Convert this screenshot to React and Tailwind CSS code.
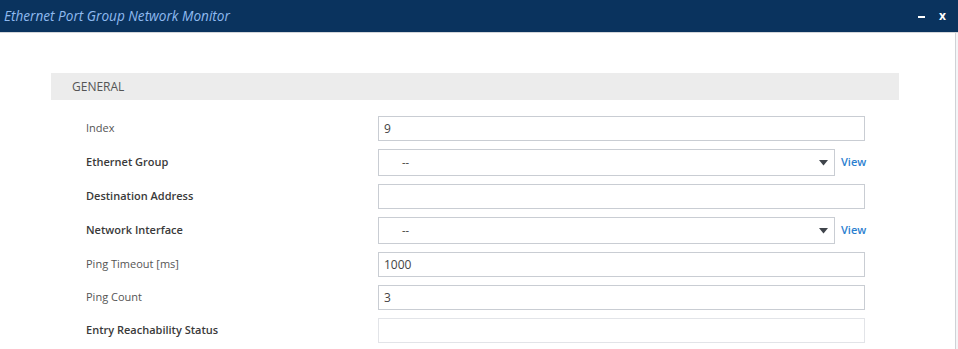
import React from 'react';

const rows = [
  { label: 'Index', value: '9', type: 'input', bold: false },
  { label: 'Ethernet Group', value: '--', type: 'select', bold: true },
  { label: 'Destination Address', value: '', type: 'input', bold: true },
  { label: 'Network Interface', value: '--', type: 'select', bold: true },
  { label: 'Ping Timeout [ms]', value: '1000', type: 'input', bold: false },
  { label: 'Ping Count', value: '3', type: 'input', bold: false },
  { label: 'Entry Reachability Status', value: '', type: 'disabled', bold: true },
];

const Field = ({ row }) => {
  if (row.type === 'select') {
    return (
      <div className="flex items-center">
        <div className="w-[457px] h-[27px] border border-[#c9cdd3] bg-white flex items-center pl-[23px] pr-[5px]">
          <span className="flex-1 text-[11px] text-[#333]">{row.value}</span>
          <svg width="9" height="6" viewBox="0 0 9 6" className="mr-[1px]">
            <path d="M0 0 L9 0 L4.5 5.5 Z" fill="#3f444b" />
          </svg>
        </div>
        <span className="ml-[6px] text-[11px] font-semibold text-[#2b80d0]">View</span>
      </div>
    );
  }
  return (
    <div
      className={
        'w-[487px] h-[25px] border bg-white flex items-center px-[5px] text-[12px] text-[#444] ' +
        (row.type === 'disabled' ? 'border-[#e2e4e8]' : 'border-[#c9cdd3]')
      }
    >
      {row.value}
    </div>
  );
};

export default function App() {
  return (
    <div className="w-[958px] h-[349px] bg-white overflow-hidden font-['Open_Sans',sans-serif]">
      {/* Title bar */}
      <div className="h-[32px] bg-[#0a335e] flex items-center justify-between pl-[4px] pr-[12px]">
        <span className="text-[13.6px] italic text-[#8fbaf0]">Ethernet Port Group Network Monitor</span>
        <div className="flex items-center gap-[14px] text-white font-bold">
          <span className="block w-[7px] h-[2px] bg-white mt-[2px]" />
          <span className="text-[12px] leading-none">x</span>
        </div>
      </div>
      <div className="h-[1px] bg-[#d3d6da]" />

      <div className="flex h-[316px]">
        <div className="w-[956px] border-r border-[#cfd2d6] pl-[51px] pt-[40px]">
          {/* Section header */}
          <div className="w-[848px] h-[27px] bg-[#ececec] flex items-center pl-[21px] text-[12px] text-[#555]">
            GENERAL
          </div>

          <div className="mt-[16px] flex flex-col gap-[8px]">
            {rows.map((row) => (
              <div key={row.label} className="flex items-center">
                <div
                  className={
                    'w-[327px] pl-[35px] text-[11px] ' +
                    (row.bold ? 'font-semibold text-[#3a3a3a]' : 'text-[#555]')
                  }
                >
                  {row.label}
                </div>
                <Field row={row} />
              </div>
            ))}
          </div>
        </div>
        <div className="flex-1 bg-[#f4f5f7]" />
      </div>
    </div>
  );
}
